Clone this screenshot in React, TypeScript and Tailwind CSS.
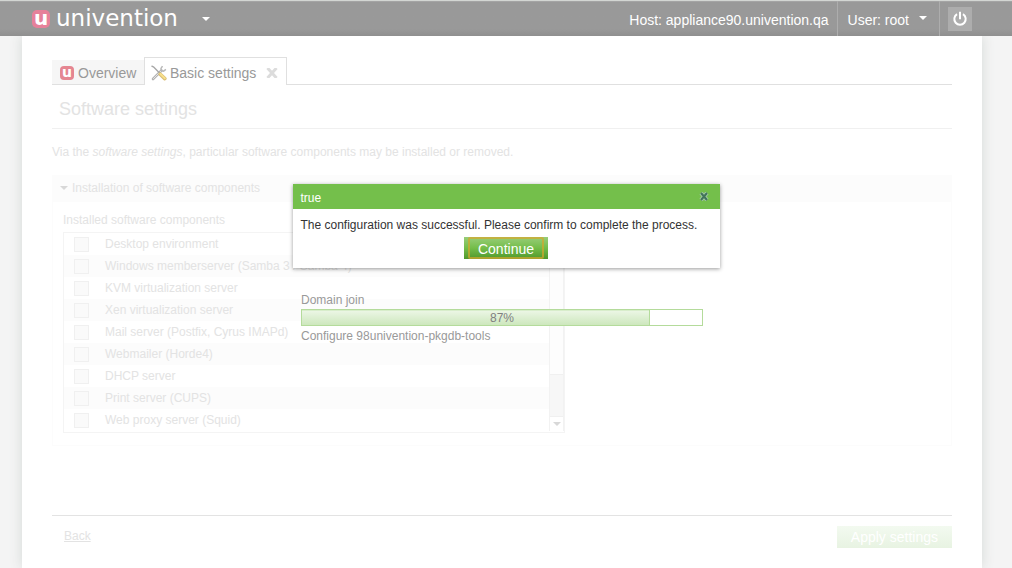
import { useState } from "react";

const COMPONENTS = [
  "Desktop environment",
  "Windows memberserver (Samba 3 / Samba 4)",
  "KVM virtualization server",
  "Xen virtualization server",
  "Mail server (Postfix, Cyrus IMAPd)",
  "Webmailer (Horde4)",
  "DHCP server",
  "Print server (CUPS)",
  "Web proxy server (Squid)",
];

function Caret({ className }: { className: string }) {
  return (
    <svg viewBox="0 0 8 4" className={className} fill="currentColor" aria-hidden="true">
      <path d="M0 0h8L4 4z" />
    </svg>
  );
}

function ToolsIcon() {
  return (
    <svg viewBox="0 0 16 16" className="size-4 shrink-0" fill="none" aria-hidden="true">
      <path d="M2 14L10.5 5.5" stroke="#b3b3b3" strokeWidth="2.6" strokeLinecap="round" />
      <path d="M2.2 13.8L10.5 5.5" stroke="#e4e4e4" strokeWidth="1" />
      <path d="M11.5 1.2L10 3.4l.3 2.3 2.3.4 2.3-1.7" stroke="#b8b8b8" strokeWidth="1.5" />
      <path d="M.9 1.2l1.8.8L9 8.4" stroke="#a6a6a6" strokeWidth="1.4" strokeLinecap="round" />
      <path d="M9.2 9.2l4.6 4.4" stroke="#d8bc72" strokeWidth="3.6" strokeLinecap="round" />
      <path d="M9.4 9l4.4 4.2" stroke="#f8e08c" strokeWidth="2" strokeLinecap="round" />
    </svg>
  );
}

function Header() {
  return (
    <header className="flex h-9 items-stretch border-t border-[#d3d6d3] bg-linear-to-b from-[#999] from-80% to-[#8f8f8f] text-sm text-white shadow-[inset_0_1px_0_#a4a4a4]">
      <div className="flex flex-1 items-center pl-8">
        <span className="flex size-[18px] items-center justify-center rounded-[5px] bg-[#e6819a] pb-0.5 font-['DejaVu_Sans',sans-serif] text-xl leading-none font-bold">
          u
        </span>
        <span className="ml-1.5 font-['DejaVu_Sans',sans-serif] text-[23px] leading-none">univention</span>
        <button type="button" aria-label="Open menu" className="ml-6 p-0">
          <Caret className="h-1 w-2" />
        </button>
      </div>
      <div className="flex items-center pt-0.5 pr-2">Host: appliance90.univention.qa</div>
      <button type="button" className="flex items-center gap-2.5 border-l border-[#adadad] pt-0.5 pr-3 pl-2.5">
        User: root
        <Caret className="mb-1 h-1 w-2" />
      </button>
      <div className="mr-10 flex items-center border-l border-[#adadad] pt-px pl-2">
        <button type="button" aria-label="Log out" className="flex size-6 items-center justify-center bg-[#adadad]">
          <svg viewBox="0 0 16 16" className="size-4" fill="none" stroke="white" strokeWidth="2" aria-hidden="true">
            <path d="M5 3.2a5.7 5.7 0 1 0 6 0M8 .8v7.4" />
          </svg>
        </button>
      </div>
    </header>
  );
}

function Tabs() {
  return (
    <div role="tablist" className="flex items-end text-sm text-[#999]">
      <button
        type="button"
        role="tab"
        aria-selected="false"
        className="flex h-[25px] w-[92px] items-center gap-1 border-b border-[#e0e0e0] bg-[#f6f6f6] pt-0.5 pl-2"
      >
        <span className="flex size-3.5 items-center justify-center rounded-sm bg-[#e58691] pb-0.5 font-['DejaVu_Sans',sans-serif] text-sm leading-none font-bold text-white">
          u
        </span>
        Overview
      </button>
      <div className="flex h-7 w-[143px] items-center border border-b-0 border-[#e0e0e0] pt-0.5 pl-1.5">
        <button type="button" role="tab" aria-selected="true" className="flex items-center gap-[3px]">
          <ToolsIcon />
          Basic settings
        </button>
        <button type="button" aria-label="Close tab" className="ml-2.5">
          <svg viewBox="0 0 12 10" className="h-2.5 w-3" stroke="#dcdcdc" strokeWidth="3" aria-hidden="true">
            <path d="M1.5 0l9 10M10.5 0l-9 10" />
          </svg>
        </button>
      </div>
      <div className="flex-1 border-b border-[#e0e0e0]" />
    </div>
  );
}

function ComponentList() {
  const [checked, setChecked] = useState<Record<string, boolean>>({});

  return (
    <div className="flex w-[502px] border border-[#f4f4f4] pb-px">
      <table className="flex-1 border-collapse">
        <tbody>
          {COMPONENTS.map((name, i) => (
            <tr key={name} className="h-[22px] even:bg-[#fcfcfc]">
              <td className="w-8 p-0 pl-2.5">
                <input
                  id={`component-${i}`}
                  type="checkbox"
                  checked={!!checked[name]}
                  onChange={(e) => setChecked({ ...checked, [name]: e.target.checked })}
                  className="block size-[15px] appearance-none border border-[#f0f0f0] bg-[#fafafa] checked:bg-[#cde8bd]"
                />
              </td>
              <td className="p-0 pl-[9px]">
                <label htmlFor={`component-${i}`} className="block leading-5">
                  {name}
                </label>
              </td>
            </tr>
          ))}
        </tbody>
      </table>
      <div className="flex w-[15px] flex-col border-x border-[#f2f2f2]">
        <div className="flex-1 bg-[#fdfdfd]" />
        <div className="h-[43px] border-y border-[#f0f0f0] bg-[#f7f7f7]" />
        <button type="button" aria-label="Scroll down" className="flex h-3.5 items-center justify-center text-[#d8d8d8]">
          <Caret className="h-1 w-2" />
        </button>
      </div>
    </div>
  );
}

function Progress({ value }: { value: number }) {
  return (
    <div className="absolute inset-x-0 top-[207px] mx-auto w-[402px] text-[#999]">
      <p className="leading-4">Domain join</p>
      <div
        role="progressbar"
        aria-label="Domain join"
        aria-valuenow={value}
        className="relative mt-px h-[17px] border border-[#b4db9b]"
      >
        <div
          className="h-full border-r border-[#b4db9b] bg-linear-to-b from-[#edf7e7] to-[#cde7bd] shadow-[inset_0_1px_0_#d8edcb]"
          style={{ width: `${value}%` }}
        />
        <span className="absolute inset-0 text-center leading-4 text-[#808080]">{value}%</span>
      </div>
      <p className="mt-0.5 leading-4">Configure 98univention-pkgdb-tools</p>
    </div>
  );
}

function ConfirmDialog({ onClose }: { onClose: () => void }) {
  return (
    <div
      role="dialog"
      aria-labelledby="dialog-title"
      className="absolute inset-x-0 top-[184px] mx-auto w-[427px] bg-white text-[#333] shadow-[0_1px_4px_rgba(0,0,0,0.4)]"
    >
      <div className="flex h-[25px] items-center justify-between bg-[#74bf4b] px-2 text-white">
        <h2 id="dialog-title" className="pt-0.5">true</h2>
        <button type="button" aria-label="Close" onClick={onClose} className="mr-0.5 flex size-3 items-center justify-center">
          <svg viewBox="0 0 10 9" className="h-[9px] w-2.5" aria-hidden="true">
            <path d="M2 1l6 7M8 1L2 8" stroke="#a3c9a4" strokeWidth="4" />
            <path d="M2 1l6 7M8 1L2 8" stroke="#42745b" strokeWidth="2" />
          </svg>
        </button>
      </div>
      <div className="flex flex-col items-center px-2 pt-2 pb-[9px]">
        <p className="self-start leading-4">The configuration was successful. Please confirm to complete the process.</p>
        <button
          type="button"
          onClick={onClose}
          className="mt-1 h-[22px] bg-linear-to-b from-[#98cd78] via-[#74bd49] to-[#4f982c] px-1 text-sm text-white"
        >
          <span className="block h-[22px] rounded-xs border-2 border-[#d4a72c]/70 px-2 leading-5">Continue</span>
        </button>
      </div>
    </div>
  );
}

export default function App() {
  const [dialogOpen, setDialogOpen] = useState(true);

  return (
    <div className="relative flex min-h-screen flex-col bg-[#f4f4f4] font-['Liberation_Sans',Arial,sans-serif] text-xs text-[#e3e3e3]">
      <Header />
      {/* Clip the page shadow so it does not bleed over the header */}
      <div className="flex flex-1 flex-col overflow-hidden">
        <main className="mr-[30px] ml-[22px] flex flex-1 flex-col bg-white px-[30px] pt-[21px] shadow-[0_0_12px_#d4d9d7]">
          <Tabs />
          <div className="relative flex-1">
            <h1 className="border-b border-[#f0f0f0] px-[7px] pt-3 pb-[7px] text-lg leading-6 font-normal">
              Software settings
            </h1>
            <p className="mt-[15px] leading-4">
              Via the <em>software settings</em>, particular software components may be installed or removed.
            </p>
            <section className="mt-[15px]">
              <button type="button" className="flex h-[27px] w-full items-center gap-1 bg-[#fcfcfc] pb-0.5 pl-2">
                <Caret className="h-1 w-2 text-[#d8d8d8]" />
                Installation of software components
              </button>
              <div className="border border-t-0 border-[#fcfcfc] px-2.5 pt-2.5 pb-3">
                <h2 className="mb-1 leading-4">Installed software components</h2>
                <ComponentList />
              </div>
            </section>
            {/* Join progress sits over the faded form */}
            <Progress value={87} />
          </div>
          <footer className="flex items-start justify-between border-t border-[#e3e3e3] pt-2.5 pb-5">
            <a href="#back" className="ml-3 leading-5 underline">
              Back
            </a>
            <button type="button" className="h-[22px] bg-linear-to-b from-[#f3faf0] to-[#e8f3e2] px-3.5 text-sm text-white">
              Apply settings
            </button>
          </footer>
        </main>
      </div>
      {dialogOpen && <ConfirmDialog onClose={() => setDialogOpen(false)} />}
    </div>
  );
}
